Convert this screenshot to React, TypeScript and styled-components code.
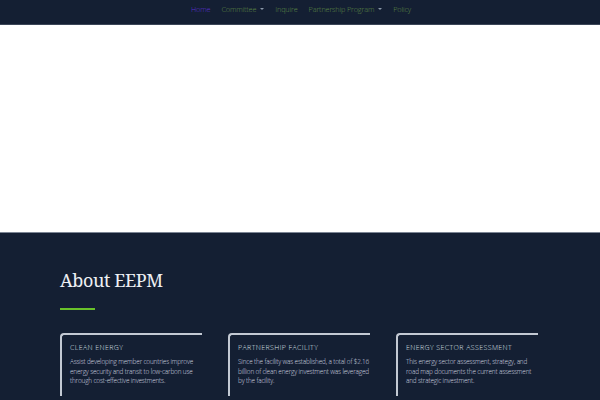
import styled, { createGlobalStyle } from "styled-components";

const GlobalStyle = createGlobalStyle`
  html, body {
    margin: 0;
    padding: 0;
    background: #ffffff;
    font-family: "Open Sans", "Liberation Sans", sans-serif;
  }
`;

type NavItem = { label: string; active?: boolean; dropdown?: boolean };

const NAV_ITEMS: Array<NavItem> = [
  { label: "Home", active: true },
  { label: "Committee", dropdown: true },
  { label: "Inquire" },
  { label: "Partnership Program", dropdown: true },
  { label: "Policy" },
];

type Card = { title: string; text: string };

const CARDS: Array<Card> = [
  {
    title: "Clean Energy",
    text: "Assist developing member countries improve energy security and transit to low-carbon use through cost-effective investments.",
  },
  {
    title: "Partnership Facility",
    text: "Since the facility was established, a total of $2.16 billion of clean energy investment was leveraged by the facility.",
  },
  {
    title: "Energy Sector Assessment",
    text: "This energy sector assessment, strategy, and road map documents the current assessment and strategic investment.",
  },
];

const App = () => {
  return (
    <Page>
      <GlobalStyle />
      <NavBar>
        <NavList>
          {NAV_ITEMS.map((item) => (
            <NavLink key={item.label} active={item.active}>
              {item.label}
              {item.dropdown && <Caret />}
            </NavLink>
          ))}
        </NavList>
      </NavBar>
      <Hero />
      <About>
        <Inner>
          <Heading>About EEPM</Heading>
          <Underline />
          <CardGrid>
            {CARDS.map((card) => (
              <CardBox key={card.title}>
                <CardTitle>{card.title}</CardTitle>
                <CardText>{card.text}</CardText>
              </CardBox>
            ))}
          </CardGrid>
        </Inner>
      </About>
    </Page>
  );
};

export default App;

const Page = styled.div`
  width: 600px;
  height: 400px;
  overflow: hidden;
  display: flex;
  flex-direction: column;
`;

const NavBar = styled.nav`
  height: 24px;
  flex-shrink: 0;
  background-color: #141f33;
  border-bottom: 1px solid #3b4658;
  display: flex;
  justify-content: center;
  align-items: center;
`;

const NavList = styled.div`
  display: flex;
  align-items: center;
  gap: 11px;
  padding-left: 2px;
  margin-top: -7px;
`;

const NavLink = styled.a<{ active?: boolean }>`
  display: flex;
  align-items: center;
  gap: 4px;
  font-size: 7.3px;
  font-weight: 300;
  letter-spacing: -0.15px;
  color: ${({ active }) => (active ? "#5a2fd0" : "#5f8a46")};
  cursor: pointer;
  white-space: nowrap;
`;

const Caret = styled.span`
  width: 0;
  height: 0;
  border-left: 2.5px solid transparent;
  border-right: 2.5px solid transparent;
  border-top: 2.5px solid #8a98a8;
`;

const Hero = styled.div`
  height: 207px;
  flex-shrink: 0;
  background: #ffffff;
`;

const About = styled.section`
  flex: 1;
  background-color: #141f33;
  border-top: 1px solid #7c8594;
  padding: 34px 60px 0;
`;

const Inner = styled.div`
  width: 480px;
`;

const Heading = styled.h2`
  margin: 0;
  font-family: "Noto Serif", "DejaVu Serif", "Liberation Serif", serif;
  font-weight: 400;
  font-size: 18px;
  letter-spacing: -0.4px;
  line-height: 26px;
  color: #eef0f4;
`;

const Underline = styled.div`
  width: 35px;
  height: 2px;
  margin-top: 15px;
  background-color: #69c12a;
`;

const CardGrid = styled.div`
  display: grid;
  grid-template-columns: repeat(3, 142px);
  column-gap: 26px;
  margin-top: 23px;
`;

const CardBox = styled.div`
  border-top: 2px solid #c3c9d3;
  border-left: 2px solid #c3c9d3;
  border-top-left-radius: 4px;
  padding: 8px 0 10px 8px;
`;

const CardTitle = styled.div`
  font-size: 7px;
  font-weight: 300;
  letter-spacing: 0.4px;
  text-transform: uppercase;
  color: #dde1e8;
  line-height: 10px;
  margin-bottom: 4px;
`;

const CardText = styled.p`
  margin: 0 -2px 0 0;
  font-size: 6.4px;
  font-weight: 300;
  letter-spacing: -0.15px;
  line-height: 9.6px;
  color: #d6dae2;
`;
